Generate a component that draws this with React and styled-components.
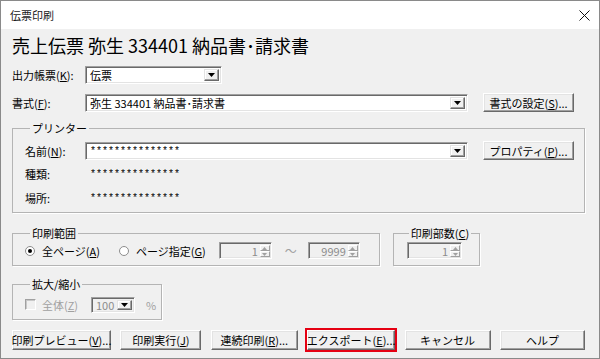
import styled, { createGlobalStyle } from "styled-components";

const GlobalStyle = createGlobalStyle`
  * { box-sizing: border-box; }
  html, body { margin: 0; padding: 0; background: #fff; }
  body { font-family: "Noto Sans CJK JP", "Noto Sans", sans-serif; font-size: 11px; color: #000; }
`;

const FONT = `"Noto Sans CJK JP", "Noto Sans", sans-serif`;

const Window = styled.div`
  width: 600px;
  height: 359px;
  border: 1px solid #8a8a8a;
  background: #f0f0f0;
  display: flex;
  flex-direction: column;
  overflow: hidden;
`;

const TitleBar = styled.div`
  height: 28px;
  background: #fff;
  display: flex;
  align-items: center;
  justify-content: space-between;
  padding: 0 9px 0 9px;
`;

const Title = styled.span`
  font-size: 11px;
  color: #1a1a1a;
`;

const Body = styled.div`
  flex: 1;
  padding: 4px 0 0 11px;
  display: flex;
  flex-direction: column;
`;

const Heading = styled.h1`
  margin: 0;
  font-family: ${FONT};
  font-size: 18px;
  font-weight: 400;
  line-height: 24px;
  height: 24px;
`;

const FormRow = styled.div`
  display: flex;
  align-items: center;
  margin-top: ${(p) => p.$top || 0}px;
  height: ${(p) => p.$h || 19}px;
`;

const Label = styled.span`
  width: ${(p) => p.$w}px;
  flex: none;
  white-space: nowrap;
  color: ${(p) => (p.$disabled ? "#a0a0a0" : "#000")};
`;

const Combo = styled.div`
  width: ${(p) => p.$w}px;
  height: ${(p) => p.$h || 18}px;
  flex: none;
  display: flex;
  align-items: stretch;
  background: ${(p) => (p.$disabled ? "#f0f0f0" : "#fff")};
  border: 1px solid;
  border-color: #a0a0a0 #fff #fff #a0a0a0;
  box-shadow: inset 1px 1px 0 #696969, inset -1px -1px 0 #e3e3e3;
  padding: 1px 2px 1px 1px;
`;

const ComboText = styled.span`
  flex: 1;
  padding-left: 3px;
  display: flex;
  align-items: center;
  white-space: nowrap;
  color: ${(p) => (p.$disabled ? "#8c8c8c" : "#000")};
`;

const DropButton = styled.span`
  width: 15px;
  flex: none;
  margin: 1px 0;
  background: #f0f0f0;
  border: 1px solid;
  border-color: #e3e3e3 #696969 #696969 #e3e3e3;
  box-shadow: inset -1px -1px 0 #a0a0a0, inset 1px 1px 0 #fff;
  display: flex;
  align-items: center;
  justify-content: center;
`;

const Button = styled.div`
  width: ${(p) => p.$w}px;
  height: ${(p) => p.$h || 19}px;
  flex: none;
  display: flex;
  align-items: center;
  justify-content: center;
  background: #f0f0f0;
  border: 1px solid;
  border-color: #fff #696969 #696969 #fff;
  box-shadow: inset -1px -1px 0 #a0a0a0, inset 1px 1px 0 #e3e3e3;
  white-space: nowrap;
  margin-left: ${(p) => p.$ml || 0}px;
  outline: ${(p) => (p.$highlight ? "2px solid #e50012" : "none")};
  outline-offset: 0;
`;

const Group = styled.fieldset`
  margin: ${(p) => p.$top || 0}px 0 0 0;
  width: ${(p) => p.$w}px;
  flex: none;
  border: 1px solid #b4b4b4;
  box-shadow: 1px 1px 0 #fff;
  padding: ${(p) => p.$pad};
  min-width: 0;
`;

const Legend = styled.legend`
  padding: 0 2px;
  margin: ${(p) => (p.$center ? "0 auto" : "0 0 0 5px")};
  font-size: 11px;
  line-height: 12px;
  height: 12px;
`;

const InfoRow = styled.div`
  display: flex;
  align-items: center;
  height: 22px;
  margin-top: ${(p) => p.$top || 0}px;
`;

const Stars = styled.span`
  padding-left: ${(p) => p.$pl ?? 5}px;
  font-family: "Liberation Mono", monospace;
  font-size: 10px;
  line-height: 10px;
  padding-top: 2px;
  color: #000;
`;

const GroupRow = styled.div`
  display: flex;
  gap: 13px;
  margin-top: 14px;
`;

const OptionRow = styled.div`
  display: flex;
  align-items: center;
  height: 17px;
`;

const Radio = styled.span`
  width: 10px;
  height: 10px;
  flex: none;
  border-radius: 50%;
  background: #fff;
  border: 1px solid #8d8d8d;
  display: flex;
  align-items: center;
  justify-content: center;
  margin-left: ${(p) => p.$ml || 0}px;
  margin-right: 7px;
  &::after {
    content: "";
    width: 4px;
    height: 4px;
    border-radius: 50%;
    background: ${(p) => (p.$checked ? "#000" : "transparent")};
  }
`;

const Check = styled.span`
  width: 11px;
  height: 11px;
  flex: none;
  border: 1px solid;
  border-color: #a0a0a0 #fff #fff #a0a0a0;
  box-shadow: inset 1px 1px 0 #c8c8c8;
  background: #f0f0f0;
  margin-right: 6px;
`;

const Spin = styled.div`
  width: ${(p) => p.$w}px;
  height: 17px;
  flex: none;
  display: flex;
  margin-left: ${(p) => p.$ml || 0}px;
  background: #f0f0f0;
  border: 1px solid;
  border-color: #a0a0a0 #fff #fff #a0a0a0;
  box-shadow: inset 1px 1px 0 #696969, inset -1px -1px 0 #e3e3e3;
  padding: 2px 1px 1px 2px;
`;

const SpinValue = styled.span`
  flex: 1;
  text-align: right;
  padding-right: 2px;
  line-height: 12px;
  color: #8c8c8c;
`;

const SpinButtons = styled.span`
  width: 10px;
  flex: none;
  display: flex;
  flex-direction: column;
`;

const SpinHalf = styled.span`
  flex: 1;
  background: #f0f0f0;
  border: 1px solid;
  border-color: #fff #a0a0a0 #a0a0a0 #fff;
  display: flex;
  align-items: center;
  justify-content: center;
`;

const Tilde = styled.span`
  margin-left: 13px;
  color: #a0a0a0;
  font-size: 12px;
`;

const Percent = styled.span`
  margin-left: 11px;
  color: #a0a0a0;
`;

const ButtonBar = styled.div`
  display: flex;
  justify-content: space-between;
  width: 573px;
  margin-top: 10px;
`;

const Arrow = () => (
  <svg width="7" height="4" viewBox="0 0 7 4">
    <path d="M0 0h7L3.5 4z" fill="#000" />
  </svg>
);

const SpinArrow = ({ up }) => (
  <svg width="5" height="3" viewBox="0 0 5 3">
    <path d={up ? "M0 3h5L2.5 0z" : "M0 0h5L2.5 3z"} fill="#a0a0a0" />
  </svg>
);

const CloseIcon = () => (
  <svg width="11" height="11" viewBox="0 0 11 11">
    <path d="M0.5 0.5l10 10M10.5 0.5l-10 10" stroke="#111" strokeWidth="1" />
  </svg>
);

const SpinBox = ({ w, ml, value }) => (
  <Spin $w={w} $ml={ml}>
    <SpinValue>{value}</SpinValue>
    <SpinButtons>
      <SpinHalf><SpinArrow up /></SpinHalf>
      <SpinHalf><SpinArrow /></SpinHalf>
    </SpinButtons>
  </Spin>
);

export default function App() {
  return (
    <>
      <GlobalStyle />
      <Window>
        <TitleBar>
          <Title>伝票印刷</Title>
          <CloseIcon />
        </TitleBar>
        <Body>
          <Heading>売上伝票 弥生 334401 納品書･請求書</Heading>

          <FormRow $top={9} $h={18}>
            <Label $w={73}>出力帳票(<u>K</u>):</Label>
            <Combo $w={137}>
              <ComboText>伝票</ComboText>
              <DropButton><Arrow /></DropButton>
            </Combo>
          </FormRow>

          <FormRow $top={9}>
            <Label $w={73}>書式(<u>F</u>):</Label>
            <Combo $w={383}>
              <ComboText>弥生 334401 納品書･請求書</ComboText>
              <DropButton><Arrow /></DropButton>
            </Combo>
            <Button $w={91} $ml={15}>書式の設定(<u>S</u>)...</Button>
          </FormRow>

          <Group $top={10} $w={573} $pad="7px 10px 3px 12px">
            <Legend>プリンター</Legend>
            <FormRow>
              <Label $w={60}>名前(<u>N</u>):</Label>
              <Combo $w={383}>
                <ComboText><Stars $pl={0}>***************</Stars></ComboText>
                <DropButton><Arrow /></DropButton>
              </Combo>
              <Button $w={91} $ml={15}>プロパティ(<u>P</u>)...</Button>
            </FormRow>
            <InfoRow $top={3}>
              <Label $w={60}>種類:</Label>
              <Stars>***************</Stars>
            </InfoRow>
            <InfoRow $top={2}>
              <Label $w={60}>場所:</Label>
              <Stars>***************</Stars>
            </InfoRow>
          </Group>

          <GroupRow>
            <Group $w={368} $pad="3px 6px 6px 12px">
              <Legend>印刷範囲</Legend>
              <OptionRow>
                <Radio $checked />
                <span>全ページ(<u>A</u>)</span>
                <Radio $ml={19} />
                <span>ページ指定(<u>G</u>)</span>
                <SpinBox w={53} ml={13} value="1" />
                <Tilde>～</Tilde>
                <SpinBox w={52} ml={11} value="9999" />
              </OptionRow>
            </Group>
            <Group $w={87} $pad="3px 6px 6px 13px">
              <Legend $center>印刷部数(<u>C</u>)</Legend>
              <OptionRow>
                <SpinBox w={55} value="1" />
              </OptionRow>
            </Group>
          </GroupRow>

          <Group $top={12} $w={150} $pad="6px 6px 6px 12px">
            <Legend>拡大/縮小</Legend>
            <OptionRow>
              <Check />
              <Label $w={49} $disabled>全体(<u>Z</u>)</Label>
              <Combo $w={44} $h={16} $disabled>
                <ComboText $disabled>100</ComboText>
                <DropButton><Arrow /></DropButton>
              </Combo>
              <Percent>%</Percent>
            </OptionRow>
          </Group>

          <ButtonBar>
            <Button $w={99} $h={20}>印刷プレビュー(<u>V</u>)...</Button>
            <Button $w={81} $h={20}>印刷実行(<u>J</u>)</Button>
            <Button $w={87} $h={20}>連続印刷(<u>R</u>)...</Button>
            <Button $w={88} $h={20} $highlight>エクスポート(<u>E</u>)...</Button>
            <Button $w={86} $h={20}>キャンセル</Button>
            <Button $w={85} $h={20}>ヘルプ</Button>
          </ButtonBar>
        </Body>
      </Window>
    </>
  );
}
